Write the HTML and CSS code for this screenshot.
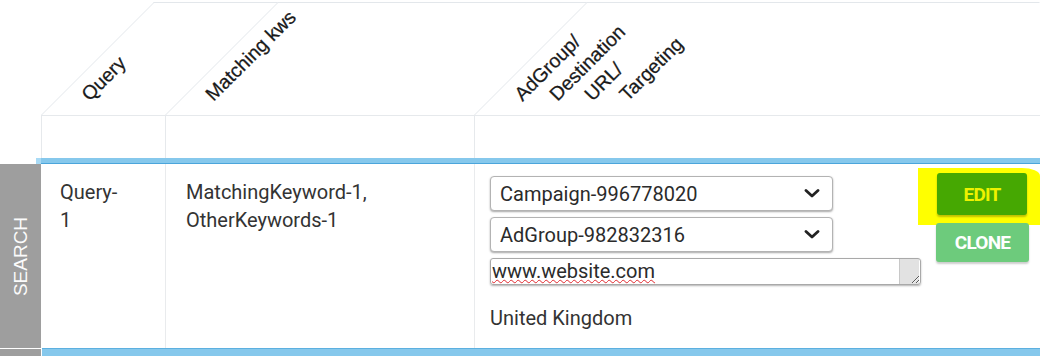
FILE: index.html
```html
<!DOCTYPE html>
<html lang="en">
<head>
    <meta charset="UTF-8">
    <meta name="viewport" content="width=device-width, initial-scale=1.0">
    <title>Search Queries</title>
    <link rel="stylesheet" href="styles.css">
</head>
<body>

<div class="sheet">
    <!-- cabeçalho inclinado -->
    <div class="corner"></div>
    <div class="head"><span class="label">Query</span></div>
    <div class="head"><span class="label">Matching kws</span></div>
    <div class="head head-wide">
        <span class="label">AdGroup/</span>
        <span class="label">Destination</span>
        <span class="label">URL/</span>
        <span class="label">Targeting</span>
    </div>

    <!-- linha de filtros -->
    <div class="corner"></div>
    <div class="filter"></div>
    <div class="filter"></div>
    <div class="filter filter-wide"></div>

    <div class="bar"></div>

    <!-- linha de dados -->
    <div class="side"><span class="side-label">SEARCH</span></div>
    <div class="cell cell-query"><div class="query-text">Query-1</div></div>
    <div class="cell cell-kws">MatchingKeyword-1, OtherKeywords-1</div>
    <div class="cell cell-target">
        <div class="select-wrap">
            <select class="select">
                <option>Campaign-996778020</option>
            </select>
            <svg class="chevron" viewBox="0 0 16 9"><path d="M2 1.5 L8 7 L14 1.5" fill="none" stroke="#222" stroke-width="2.8" stroke-linecap="round" stroke-linejoin="round"/></svg>
        </div>
        <div class="select-wrap">
            <select class="select">
                <option>AdGroup-982832316</option>
            </select>
            <svg class="chevron" viewBox="0 0 16 9"><path d="M2 1.5 L8 7 L14 1.5" fill="none" stroke="#222" stroke-width="2.8" stroke-linecap="round" stroke-linejoin="round"/></svg>
        </div>
        <textarea class="url" spellcheck="true">www.website.com</textarea>
        <div class="country">United Kingdom</div>
    </div>
    <div class="cell-actions">
        <div class="highlight">
            <button type="button" class="btn btn-edit">EDIT</button>
        </div>
        <button type="button" class="btn btn-clone">CLONE</button>
    </div>

    <div class="side side-next"></div>
    <div class="bar bar-bottom"></div>
</div>

</body>
</html>
```

FILE: styles.css
```css
/* Reset */
* {
    margin: 0;
    padding: 0;
    box-sizing: border-box;
}

body {
    font-family: 'Roboto', 'Liberation Sans', sans-serif;
    color: #333;
    background: #fff;
    overflow: hidden;
}

/* Tabela */
.sheet {
    display: grid;
    grid-template-columns: 41px 124px 309px 446px 120px;
    grid-template-rows: 113px 43px 6px 184px 8px;
    margin-top: 2px;
}

/* Cabeçalho inclinado */
.head {
    position: relative;
    display: flex;
    align-items: flex-end;
    padding: 0 0 11px 51px;
    font-family: 'Liberation Sans', Arial, sans-serif;
    font-size: 19.5px;
    color: #1a1a1a;
    -webkit-text-stroke: 0.25px #1a1a1a;
}

.head::before {
    content: '';
    position: absolute;
    top: 0;
    right: 0;
    bottom: 0;
    left: 0;
    border-left: 1px solid #e3e7eb;
    border-top: 1px solid #e3e7eb;
    transform: skewX(-45deg);
    transform-origin: left bottom;
}

.head-wide {
    grid-column: 4 / 6;
}

.head-wide::before {
    right: 113px;
}

.label {
    position: relative;
    display: block;
    line-height: 1;
    white-space: nowrap;
    transform: rotate(-45deg);
    transform-origin: left bottom;
}

.head-wide .label {
    flex: none;
    width: 35px;
}

/* Filtros */
.filter {
    border-top: 1px solid #e6e9ec;
    border-left: 1px solid #e6e9ec;
}

.filter-wide {
    grid-column: 4 / 6;
}

/* Barra azul */
.bar {
    grid-column: 1 / 6;
    margin-left: 36px;
    background:
        linear-gradient(to right, #a8daf5 5px, transparent 5px),
        linear-gradient(#86c8ec 5px, #4ba5db 5px);
}

.bar-bottom {
    grid-column: 2 / 6;
    margin-left: 1px;
    background: linear-gradient(#5cb0e0 1px, #86c8ec 1px);
}

/* Coluna lateral */
.side {
    background: #9e9e9e;
    display: flex;
    align-items: center;
    justify-content: center;
    overflow: hidden;
}

.side-next {
    margin-top: 1px;
}

.side-label {
    flex: none;
    transform: rotate(-90deg);
    color: #fbfbfb;
    font-family: 'Liberation Sans', Arial, sans-serif;
    font-size: 19px;
    line-height: 1;
}

/* Células */
.cell {
    padding: 14px 20px;
    font-size: 20px;
    line-height: 28px;
}

.cell-query {
    padding-left: 19px;
}

.query-text {
    max-width: 52px;
}

.cell-kws,
.cell-target {
    border-left: 1px solid #e9ebed;
}

.cell-target {
    padding: 12px 15px;
}

/* Campos */
.select-wrap {
    position: relative;
    width: 343px;
    margin-bottom: 6px;
}

.select {
    display: block;
    width: 100%;
    height: 35px;
    appearance: none;
    border: 1px solid #b3b3b3;
    border-radius: 4px;
    box-shadow: 0 1px 2px rgba(0, 0, 0, 0.35);
    background: #fff;
    font: 20px 'Roboto', sans-serif;
    color: #2b2b2b;
    padding: 0 40px 0 9px;
}

.chevron {
    position: absolute;
    right: 13px;
    top: 13px;
    width: 16px;
    height: 9px;
    pointer-events: none;
}

.url {
    display: block;
    width: 431px;
    height: 27px;
    border: 1px solid #a9a9a9;
    border-radius: 3px;
    box-shadow: 0 1px 2px rgba(0, 0, 0, 0.3);
    font: 20px/24px 'Roboto', sans-serif;
    color: #2b2b2b;
    padding: 0 22px 0 1px;
    background: linear-gradient(to left, #fff 1px, #e2e2e2 1px, #e2e2e2 20px, #c8c8c8 20px, #c8c8c8 21px, #fff 21px);
    overflow: hidden;
    text-decoration: underline wavy #e0282e;
    text-decoration-thickness: 1px;
}

.country {
    margin-top: 19px;
}

/* Botões */
.cell-actions {
    padding-top: 4px;
}

.highlight {
    margin-left: -2px;
    height: 57px;
    padding: 5px 0 0 19px;
    background: #ffff00;
    border-top-right-radius: 18px 8px;
}

.btn {
    display: block;
    border: none;
    border-radius: 3px;
    font: bold 19px 'Roboto', sans-serif;
    letter-spacing: -0.8px;
    cursor: pointer;
}

.btn-edit {
    width: 90px;
    height: 42px;
    background: #46a802;
    color: #eef200;
    box-shadow: 0 2px 2px rgba(0, 0, 0, 0.25);
}

.btn-clone {
    width: 93px;
    height: 39px;
    margin: -2px 0 0 16px;
    background: #6dcb7c;
    color: #fff;
    box-shadow: 0 2px 2px rgba(0, 0, 0, 0.2);
}
```
